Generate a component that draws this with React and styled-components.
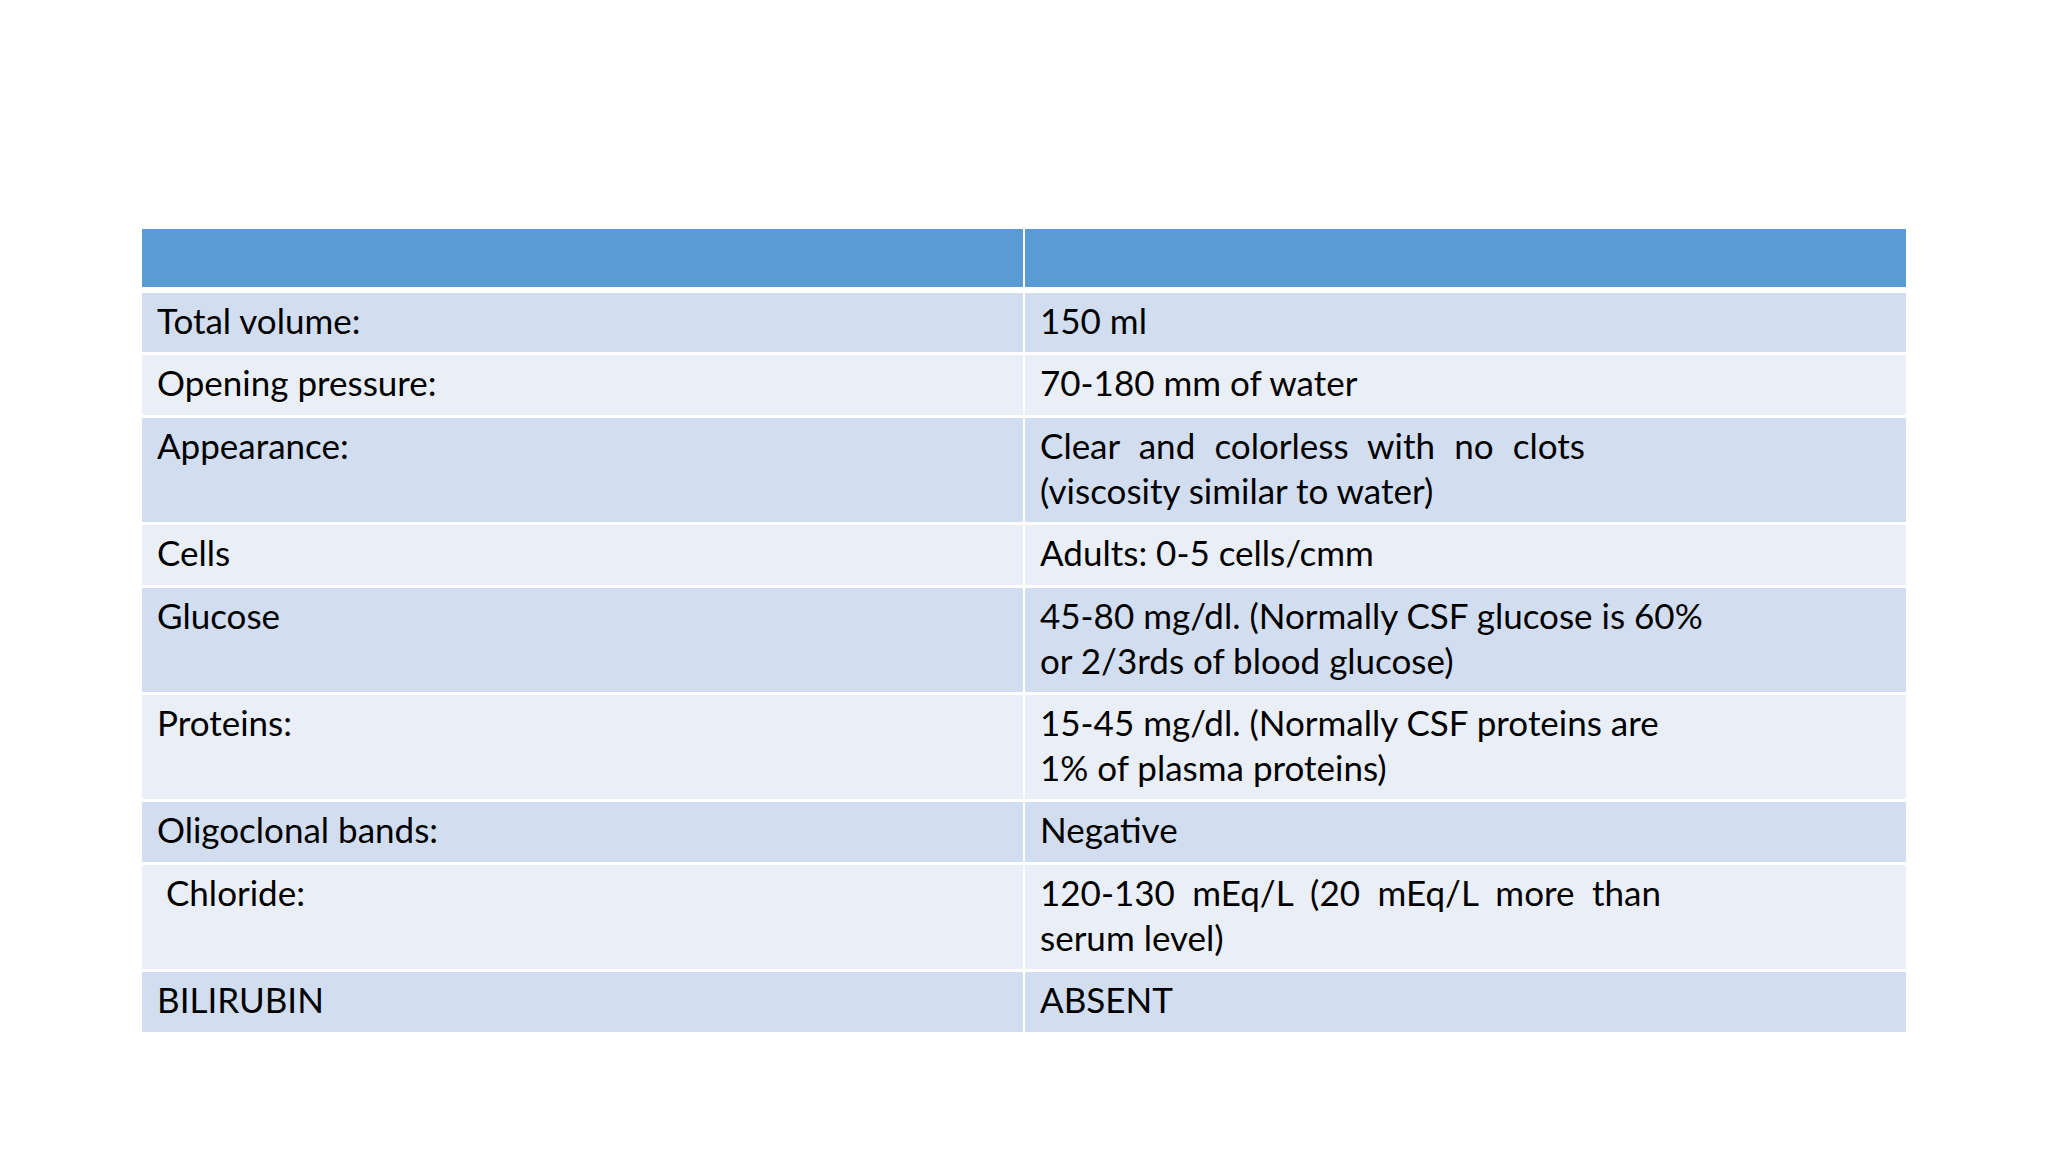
import React from "react";
import styled, { createGlobalStyle } from "styled-components";

const Global = createGlobalStyle`
  html, body { margin: 0; padding: 0; background: #ffffff; }
  body { font-family: Lato, "Noto Sans", "DejaVu Sans", sans-serif; }
`;

const Slide = styled.div`
  width: 2048px;
  height: 1152px;
  box-sizing: border-box;
  padding: 229px 142px 0 142px;
  background: #ffffff;
`;

const Table = styled.div`
  display: flex;
  flex-direction: column;
  gap: 3px;
  width: 1764px;
`;

const Row = styled.div`
  display: grid;
  grid-template-columns: 1fr 1fr;
  column-gap: 2px;
  margin-bottom: ${(p) => (p.$header ? "3px" : "0")};
`;

const tones = {
  header: "#5b9bd5",
  dark: "#d2deef",
  light: "#eaeff7",
};

const Cell = styled.div`
  background: ${(p) => tones[p.$tone]};
  min-height: ${(p) => (p.$tone === "header" ? "58px" : "0")};
  box-sizing: border-box;
  padding: ${(p) => (p.$tone === "header" ? "0" : "5px 16px 9.4px 15px")};
  font-size: 35px;
  line-height: 45px;
  color: #000000;
  white-space: nowrap;
`;

const Line = styled.span`
  display: block;
  width: ${(p) => (p.$w ? `${p.$w}px` : "auto")};
  text-align: ${(p) => (p.$w ? "justify" : "left")};
  text-align-last: ${(p) => (p.$w ? "justify" : "auto")};
  white-space: ${(p) => (p.$w ? "normal" : "nowrap")};
`;

const rows = [
  ["Total volume:", [["150 ml"]]],
  ["Opening pressure:", [["70-180 mm of water"]]],
  ["Appearance:", [["Clear and colorless with no clots", 545], ["(viscosity similar to water)"]]],
  ["Cells", [["Adults: 0-5 cells/cmm"]]],
  ["Glucose", [["45-80 mg/dl. (Normally CSF glucose is 60%"], ["or 2/3rds of blood glucose)"]]],
  ["Proteins:", [["15-45 mg/dl. (Normally CSF proteins are"], ["1% of plasma proteins)"]]],
  ["Oligoclonal bands:", [["Negative"]]],
  ["\u00a0Chloride:", [["120-130 mEq/L (20 mEq/L more than", 621], ["serum level)"]]],
  ["BILIRUBIN", [["ABSENT"]]],
];

export default function App() {
  return (
    <>
      <Global />
      <Slide>
        <Table>
          <Row $header>
            <Cell $tone="header" />
            <Cell $tone="header" />
          </Row>
          {rows.map(([label, lines], i) => {
            const tone = i % 2 === 0 ? "dark" : "light";
            return (
              <Row key={i}>
                <Cell $tone={tone}>{label}</Cell>
                <Cell $tone={tone}>
                  {lines.map(([t, w], j) => (
                    <Line key={j} $w={w}>
                      {t}
                    </Line>
                  ))}
                </Cell>
              </Row>
            );
          })}
        </Table>
      </Slide>
    </>
  );
}
